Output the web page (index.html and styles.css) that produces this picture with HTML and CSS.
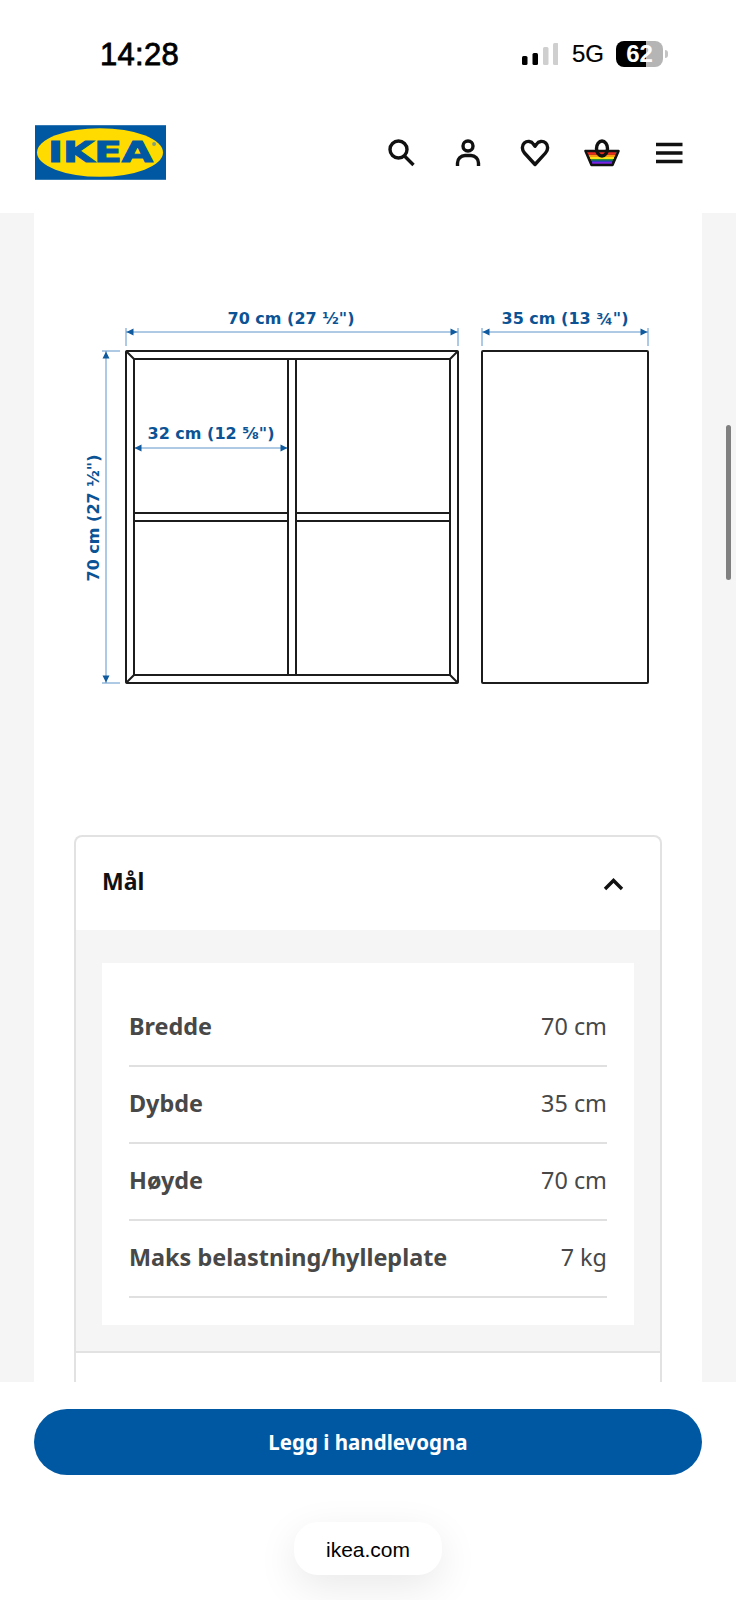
FILE: index.html
```html
<!DOCTYPE html>
<html lang="no">
<head>
<meta charset="utf-8">
<title>IKEA</title>
<link rel="stylesheet" href="styles.css">
</head>
<body>
<div class="page">
  <div class="status">
    <span class="clock">14:28</span>
    <div class="status-right">
      <svg class="signal" viewBox="522 43 36 22" width="36" height="22" aria-hidden="true">
        <rect x="522" y="56" width="5.5" height="9" rx="1.5" fill="#000"/>
        <rect x="532.5" y="53" width="5.5" height="12" rx="1.5" fill="#000"/>
        <rect x="543" y="47" width="5.5" height="18" rx="1.5" fill="#cfcfcf"/>
        <rect x="553" y="43" width="5.5" height="22" rx="1.5" fill="#cfcfcf"/>
      </svg>
      <span class="network">5G</span>
      <div class="battery">62</div>
    </div>
  </div>

  <header class="site-header">
    <svg class="logo" viewBox="35 125 132 55" width="131" height="55" role="img" aria-label="IKEA">
      <rect x="35" y="125" width="132" height="55" fill="#0058a3"/>
      <ellipse cx="100.5" cy="152.5" rx="63.5" ry="24.5" fill="#ffdb00"/>
      <text class="logo-text" x="48" y="162.500" textLength="106" lengthAdjust="spacingAndGlyphs">IKEA</text>
      <circle cx="155" cy="144" r="2" fill="#7fa07a"/>
    </svg>
    <nav class="icons">
      <span class="icon-slot">
        <svg viewBox="382 137 36 30" width="36" height="30" aria-hidden="true"><circle cx="397.500" cy="148.500" r="8.500" class="ink"/><path d="M403.500 155l9 9" class="ink"/></svg>
      </span>
      <span class="icon-slot">
        <svg viewBox="450 137 36 30" width="36" height="30" aria-hidden="true"><circle cx="468" cy="145" r="5" class="ink"/><path d="M457.500 165v-3a7.500 7.500 0 0 1 7.500-7.500h6a7.500 7.500 0 0 1 7.500 7.500v3" class="ink"/></svg>
      </span>
      <span class="icon-slot">
        <svg viewBox="517 137 36 30" width="36" height="30" aria-hidden="true"><path d="M535 163.500l-10.500-11.500c-2.800-3.200-2.800-7.500-.2-10 2.800-2.500 7.200-2 9 1l1.700 2.300 1.700-2.300c1.800-3 6.200-3.500 9-1 2.600 2.500 2.600 6.800-.2 10z" class="ink" stroke-linejoin="round"/></svg>
      </span>
      <span class="icon-slot">
        <svg viewBox="584 137 36 30" width="36" height="30" aria-hidden="true">
          <path d="M587 150h30l-5 14h-20z" fill="#000"/>
          <rect x="588" y="151" width="28" height="2.800" fill="#ea2a1e"/>
          <rect x="589" y="153.800" width="26" height="2.200" fill="#f89a12"/>
          <rect x="590" y="156" width="24" height="2.200" fill="#fbe216"/>
          <rect x="591" y="158.200" width="22" height="1.400" fill="#2cae3c"/>
          <rect x="591.500" y="159.600" width="21" height="1.200" fill="#2456e0"/>
          <rect x="592" y="160.800" width="20" height="2.200" fill="#7a22e0"/>
          <path d="M585.500 150h33l-6 14h-21z" fill="none" stroke="#111" stroke-width="2.500" stroke-linejoin="round"/>
          <ellipse cx="602" cy="147.500" rx="5.500" ry="7.500" class="ink"/>
        </svg>
      </span>
      <span class="icon-slot">
        <svg viewBox="651 137 36 30" width="36" height="30" aria-hidden="true"><path d="M656 143.500h26.500M656 152h26.500M656 160.500h26.500" class="ink"/></svg>
      </span>
    </nav>
  </header>

  <main class="content">
    <div class="sheet">
      <svg class="diagram" viewBox="34 213 668 622" width="668" height="622" role="img" aria-label="Mål">
        <g class="dim-line">
          <path d="M126 328v18M458 328v18M126 332h332"/>
          <path d="M482 328v18M648 328v18M482 332h166"/>
          <path d="M102 351h18M102 683h18M106 351v332"/>
          <path d="M134 448h154"/>
        </g>
        <g class="dim-head">
          <path d="M126.500 332l7-3.500v7zM457.500 332l-7-3.500v7z"/>
          <path d="M482.500 332l7-3.500v7zM647.500 332l-7-3.500v7z"/>
          <path d="M106 351.500l-3.500 7h7zM106 682.500l-3.500-7h7z"/>
          <path d="M134.500 448l7-3.500v7zM287.500 448l-7-3.500v7z"/>
        </g>
        <g class="shape">
          <rect x="126" y="351" width="332" height="332" rx="1"/>
          <rect x="134" y="359" width="316" height="316"/>
          <path d="M126 351l8 8M458 351l-8 8M126 683l8-8M458 683l-8-8"/>
          <path d="M288 359v316M296 359v316"/>
          <path d="M134 513h154M134 521h154M296 513h154M296 521h154"/>
          <rect x="482" y="351" width="166" height="332" rx="1"/>
        </g>
        <g class="dim-text">
          <text x="291" y="324">70 cm (27 ½")</text>
          <text x="565" y="324">35 cm (13 ¾")</text>
          <text x="211" y="439">32 cm (12 ⅝")</text>
          <text x="99" y="518" transform="rotate(-90 99 518)">70 cm (27 ½")</text>
        </g>
      </svg>

      <section class="card">
        <div class="card-head">
          <h2 class="card-title">Mål</h2>
          <svg viewBox="600 875 28 18" width="28" height="18" aria-hidden="true"><path d="M605 889l8.500-8.500 8.500 8.500" class="ink"/></svg>
        </div>
        <div class="card-body">
          <dl class="spec">
            <div class="spec-row"><dt>Bredde</dt><dd>70 cm</dd></div>
            <div class="spec-row"><dt>Dybde</dt><dd>35 cm</dd></div>
            <div class="spec-row"><dt>Høyde</dt><dd>70 cm</dd></div>
            <div class="spec-row"><dt>Maks belastning/hylleplate</dt><dd>7 kg</dd></div>
          </dl>
        </div>
        <div class="card-next"></div>
      </section>
    </div>
  </main>

  <div class="scrollbar"></div>

  <div class="action">
    <button class="buy" type="button">Legg i handlevogna</button>
    <div class="url">ikea.com</div>
  </div>
</div>
</body>
</html>
```
FILE: styles.css
```css
* { box-sizing: border-box; }
html, body { margin: 0; padding: 0; background: #fff; }
.page {
  position: relative;
  width: 736px;
  height: 1600px;
  overflow: hidden;
  display: flex;
  flex-direction: column;
  font-family: "Noto Sans", "Open Sans", sans-serif;
}
.status {
  height: 108px;
  flex: none;
  display: flex;
  align-items: center;
  justify-content: space-between;
  padding: 0 68px 0 100px;
  font-family: "Liberation Sans", Arial, sans-serif;
  color: #000;
}
.clock { margin-top: 2px; font-size: 31px; font-weight: 400; letter-spacing: 0.3px; -webkit-text-stroke: 0.8px #000; }
.status-right { display: flex; align-items: center; }
.signal { display: block; margin-right: 14px; }
.network { font-size: 24px; width: 44px; -webkit-text-stroke: 0.2px #000; }
.battery {
  position: relative;
  width: 47px;
  height: 26px;
  margin-right: 5px;
  border-radius: 8px;
  background: linear-gradient(90deg, #000 64%, #b5b5b5 64%);
  color: #fff;
  font-weight: 700;
  font-size: 24px;
  line-height: 26px;
  text-align: center;
}
.battery::after {
  content: "";
  position: absolute;
  left: 49px;
  top: 9px;
  width: 3px;
  height: 8px;
  border-radius: 0 3px 3px 0;
  background: #c4c4c4;
}
.site-header {
  height: 105px;
  flex: none;
  display: flex;
  align-items: center;
  justify-content: space-between;
  padding: 0 34px 16px 35px;
}
.logo { display: block; }
.logo-text {
  font-family: "DejaVu Sans", sans-serif;
  font-weight: 700;
  font-size: 28px;
  fill: #0058a3;
  stroke: #0058a3;
  stroke-width: 1px;
}
.icons { display: flex; }
.icon-slot { width: 67px; display: flex; justify-content: center; }
.icon-slot svg { display: block; }
.ink { fill: none; stroke: #111; stroke-width: 3.400px; }
.content {
  flex: 1;
  min-height: 0;
  overflow: hidden;
  background: #f5f5f5;
  padding: 0 34px;
}
.sheet { background: #fff; height: 100%; }
.diagram { display: block; }
.dim-line { fill: none; stroke: #5f94c8; stroke-width: 1px; }
.dim-head { fill: #0f5a9e; }
.shape { fill: none; stroke: #1c1c1c; stroke-width: 2px; }
.dim-text text {
  font-family: "DejaVu Sans", sans-serif;
  font-weight: 700;
  font-size: 16px;
  fill: #0b5394;
  text-anchor: middle;
}
.card {
  margin: 0 40px;
  border: 2px solid #e2e2e2;
  border-bottom: 0;
  border-radius: 8px 8px 0 0;
}
.card-head {
  height: 93px;
  display: flex;
  align-items: center;
  justify-content: space-between;
  padding: 0 32px 0 26px;
}
.card-head svg { display: block; }
.card-title {
  margin: 0 0 6px;
  font-size: 23px;
  font-weight: 700;
  color: #111;
}
.card-body {
  background: #f5f5f5;
  padding: 33px 26px 26px;
  border-bottom: 2px solid #e2e2e2;
}
.spec {
  margin: 0;
  background: #fff;
  padding: 27px;
  color: #484848;
  font-size: 23.400px;
}
.spec-row {
  height: 77px;
  display: flex;
  align-items: center;
  justify-content: space-between;
  padding-bottom: 3px;
  border-bottom: 2px solid #e0e0e0;
}
.spec-row dt { font-weight: 700; }
.spec-row dd { margin: 0; }
.card-next { height: 60px; background: #fff; }
.scrollbar {
  position: absolute;
  left: 726px;
  top: 425px;
  width: 5px;
  height: 155px;
  border-radius: 3px;
  background: #808080;
}
.action {
  height: 218px;
  flex: none;
  background: #fff;
  display: flex;
  flex-direction: column;
  align-items: center;
  padding: 27px 34px 0;
}
.buy {
  width: 100%;
  height: 66px;
  border: 0;
  border-radius: 33px;
  background: #0058a3;
  color: #fff;
  font-family: "Noto Sans", sans-serif;
  font-weight: 700;
  font-size: 20.500px;
}
.url {
  margin-top: 47px;
  width: 148px;
  height: 53px;
  display: flex;
  align-items: center;
  justify-content: center;
  padding-top: 3px;
  border-radius: 24px;
  background: #fff;
  box-shadow: 0 12px 40px rgba(0, 0, 0, 0.09);
  font-family: "Liberation Sans", Arial, sans-serif;
  font-size: 21px;
  color: #000;
}
```
